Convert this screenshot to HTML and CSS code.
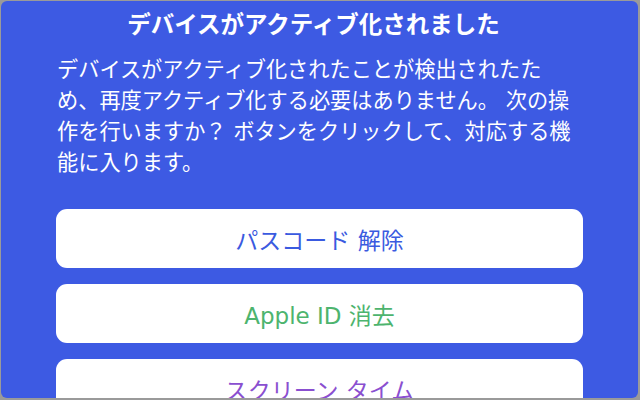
FILE: index.html
```html
<!DOCTYPE html>
<html lang="ja">
<head>
<meta charset="utf-8">
<link rel="stylesheet" href="styles.css">
</head>
<body>
<div class="frame">
  <h1 class="title">デバイスがアクティブ化されました</h1>
  <p class="message">デバイスがアクティブ化されたことが検出されたた<br>め、再度アクティブ化する必要はありません。 次の操<br>作を行いますか？ ボタンをクリックして、対応する機<br>能に入ります。</p>
  <div class="actions">
    <div class="btn btn-blue">パスコード 解除</div>
    <div class="btn btn-green">Apple ID 消去</div>
    <div class="btn btn-purple">スクリーン タイム</div>
  </div>
</div>
</body>
</html>
```
FILE: styles.css
```css
html, body {
  margin: 0;
  padding: 0;
  width: 640px;
  height: 400px;
  overflow: hidden;
  background: #9a9a9a;
}
body {
  font-family: "DejaVu Sans", "Noto Sans CJK JP", sans-serif;
}
.frame {
  margin: 1px 2px 2px 1px;
  height: 397px;
  border-radius: 6px;
  background: #3d5ae3;
  overflow: hidden;
  box-sizing: border-box;
  padding: 9px 55px 0 55px;
  color: #ffffff;
}
.title {
  margin: 0;
  font-size: 23.5px;
  line-height: 30px;
  font-weight: 700;
  text-align: center;
  padding-right: 12px;
  white-space: nowrap;
}
.message {
  margin: 14px 0 0 1px;
  font-size: 21.2px;
  line-height: 31px;
  white-space: nowrap;
}
.actions {
  margin-top: 31px;
  display: flex;
  flex-direction: column;
  gap: 16px;
}
.btn {
  height: 59px;
  border-radius: 11px;
  background: #ffffff;
  display: flex;
  align-items: center;
  justify-content: center;
  font-size: 23px;
  flex-shrink: 0;
}
.btn-blue { color: #3a5ae0; }
.btn-green { color: #4db46e; }
.btn-purple { color: #8a4fd0; }
```
